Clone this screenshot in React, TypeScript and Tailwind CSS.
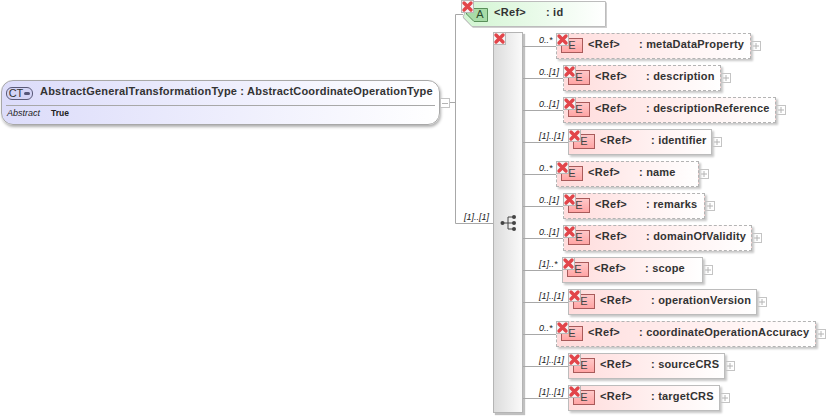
const font = "font-['Liberation_Sans',Arial,sans-serif]";

type Row = { offset: number; w: number; dashed: boolean; mult: string; name: string };

const rows: Row[] = [
  { offset: 33, w: 195, dashed: true, mult: "0..*", name: "metaDataProperty" },
  { offset: 40, w: 158, dashed: true, mult: "0..[1]", name: "description" },
  { offset: 40, w: 213, dashed: true, mult: "0..[1]", name: "descriptionReference" },
  { offset: 45, w: 144, dashed: false, mult: "[1]..[1]", name: "identifier" },
  { offset: 33, w: 143, dashed: true, mult: "0..*", name: "name" },
  { offset: 40, w: 142, dashed: true, mult: "0..[1]", name: "remarks" },
  { offset: 40, w: 189, dashed: true, mult: "0..[1]", name: "domainOfValidity" },
  { offset: 39, w: 141, dashed: false, mult: "[1]..*", name: "scope" },
  { offset: 45, w: 189, dashed: false, mult: "[1]..[1]", name: "operationVersion" },
  { offset: 33, w: 260, dashed: true, mult: "0..*", name: "coordinateOperationAccuracy" },
  { offset: 45, w: 157, dashed: false, mult: "[1]..[1]", name: "sourceCRS" },
  { offset: 45, w: 152, dashed: false, mult: "[1]..[1]", name: "targetCRS" },
];

function RedX() {
  return (
    <svg className="absolute -left-px -top-px" width="13" height="13" viewBox="0 0 13 13">
      <rect x="0.5" y="0.5" width="12" height="12" fill="#f4f4f4" stroke="#b8b8b8" />
      <path d="M3 3 L10 10 M10 3 L3 10" stroke="#e2454a" strokeWidth="3.4" strokeLinecap="round" />
    </svg>
  );
}

function Toggle({ open }: { open?: boolean }) {
  return (
    <svg className="mt-[8px] shrink-0" width="10" height="10" viewBox="0 0 10 10">
      <rect x="0.5" y="0.5" width="9" height="9" fill="#ffffff" stroke="#c4c4c4" />
      <path d={open ? "M2 5 H8" : "M2 5 H8 M5 2 V8"} stroke="#b4b4b4" />
    </svg>
  );
}

function Element({ row }: { row: Row }) {
  const border = row.dashed ? "border border-dashed border-[#b4b4b4]" : "border border-[#bcbcbc]";
  return (
    <div className="relative flex h-[26px]">
      <div className="absolute left-0 top-[13px] h-px bg-[#a8a8a8]" style={{ width: row.offset }} />
      <div className="absolute left-4 top-px text-[9px] italic leading-3 text-[#222]">{row.mult}</div>
      <div
        className={`relative flex shrink-0 items-start bg-gradient-to-r from-[#ffdcdc] to-[#ffffff] shadow-[2px_2px_2px_#c8c8c8] ${border}`}
        style={{ marginLeft: row.offset, width: row.w }}
      >
        <div className="ml-1 mt-1 flex h-[15px] w-[22px] shrink-0 items-center justify-center border border-[#a85a5a] bg-gradient-to-b from-[#ffc8c8] to-[#ffa4a4] text-[11px] leading-none text-[#444]">
          E
        </div>
        <span className="ml-[5px] mt-[2px] w-[51px] shrink-0 text-[11px] font-bold tracking-[0.3px] text-[#333]">&lt;Ref&gt;</span>
        <span className="mt-[2px] whitespace-nowrap text-[11px] font-bold tracking-[0.2px] text-[#333]">: {row.name}</span>
        <RedX />
      </div>
      <Toggle />
    </div>
  );
}

export default function App() {
  return (
    <div className={`relative flex h-[417px] w-[826px] items-start overflow-hidden bg-white ${font}`}>
      {/* complex type */}
      <div className="relative ml-px mt-[80px] h-[45px] w-[439px] shrink-0 rounded-[12px] border border-[#a8a8a8] bg-gradient-to-r from-[#dcdcfa] to-[#ffffff] shadow-[1px_2px_3px_#b0b0b0]">
        <div className="mx-1 flex h-[25px] items-center border-b border-[#a8a8a8]">
          <div className="flex h-[13px] w-[27px] shrink-0 items-center justify-center gap-px rounded-[6px] border border-[#5a5a78] bg-[#d4d4f6] text-[11px] leading-none text-[#333]">
            CT
            <span className="h-[3px] w-[6px] rounded-sm bg-[#555578]" />
          </div>
          <span className="mb-1 ml-[7px] whitespace-nowrap text-[11px] font-bold tracking-[0.2px] text-[#333]">
            AbstractGeneralTransformationType : AbstractCoordinateOperationType
          </span>
        </div>
        <div className="ml-[5px] mt-px flex h-[14px] items-center">
          <span className="w-[44px] text-[9px] italic text-[#222]">Abstract</span>
          <span className="mb-[2px] text-[8.5px] font-bold text-[#222]">True</span>
        </div>
      </div>

      {/* wires from the type to the attribute and the sequence */}
      <svg className="absolute left-[440px] top-0" width="60" height="230" viewBox="0 0 60 230">
        <path d="M10 102.5 H15.5 M15.5 14.5 V223.5 M15.5 14.5 H23 M15.5 223.5 H53" stroke="#a8a8a8" fill="none" />
        <rect x="0.5" y="98.5" width="9" height="9" fill="#ffffff" stroke="#c4c4c4" />
        <path d="M2 103.5 H8" stroke="#b4b4b4" />
      </svg>
      <div className="absolute left-[464px] top-[211px] text-[9px] italic leading-3 text-[#222]">[1]..[1]</div>

      <div className="ml-[22px] flex flex-col pt-px">
        {/* attribute */}
        <div className="relative h-[26px] w-[146px]">
          <svg className="absolute left-0 top-0" width="148" height="30" viewBox="0 0 148 30">
            <defs>
              <linearGradient id="attr" x1="0" x2="1" y1="0" y2="0">
                <stop offset="0" stopColor="#d2f5d2" />
                <stop offset="1" stopColor="#ffffff" />
              </linearGradient>
            </defs>
            <path d="M8 1.5 H145 V27 H11 L1 17 Z" fill="#d0d0d0" />
            <path d="M8 0.5 H143.5 V25.5 H10 L1 16 Z" fill="url(#attr)" stroke="#bcbcbc" />
            <path d="M4.5 7.5 H25.5 V20.5 H12 L4.5 13 Z" fill="#a8dca8" stroke="#5a8f5a" />
          </svg>
          <div className="relative flex h-[23px] items-center">
            <span className="ml-[8px] w-[20px] pt-[4px] text-center text-[11px] leading-none text-[#2c4a2c]">A</span>
            <span className="ml-[4px] w-[52px] text-[11px] font-bold tracking-[0.3px] text-[#333]">&lt;Ref&gt;</span>
            <span className="text-[11px] font-bold tracking-[0.2px] text-[#333]">: id</span>
          </div>
          <RedX />
        </div>

        {/* sequence */}
        <div className="ml-[31px] mt-[5px] flex items-start">
          <div className="relative h-[381px] w-[30px] shrink-0 border border-[#b4b4b4] bg-gradient-to-r from-[#dcdcdc] to-[#fafafa] shadow-[2px_2px_1px_#c0c0c0]">
            <RedX />
            <svg className="absolute left-[5px] top-[181px]" width="20" height="18" viewBox="0 0 20 18">
              <path d="M3 9 H9 M9 3 V15 M9 3 H15 M9 9 H15 M9 15 H15" stroke="#444" fill="none" />
              <circle cx="3.5" cy="9" r="2" fill="#444" />
              <circle cx="15" cy="3" r="2" fill="#444" />
              <circle cx="15" cy="9" r="2" fill="#444" />
              <circle cx="15" cy="15" r="2" fill="#444" />
            </svg>
          </div>
          <div className="flex flex-col gap-[6px] pt-px">
            {rows.map((row) => (
              <Element key={row.name} row={row} />
            ))}
          </div>
        </div>
      </div>
    </div>
  );
}
